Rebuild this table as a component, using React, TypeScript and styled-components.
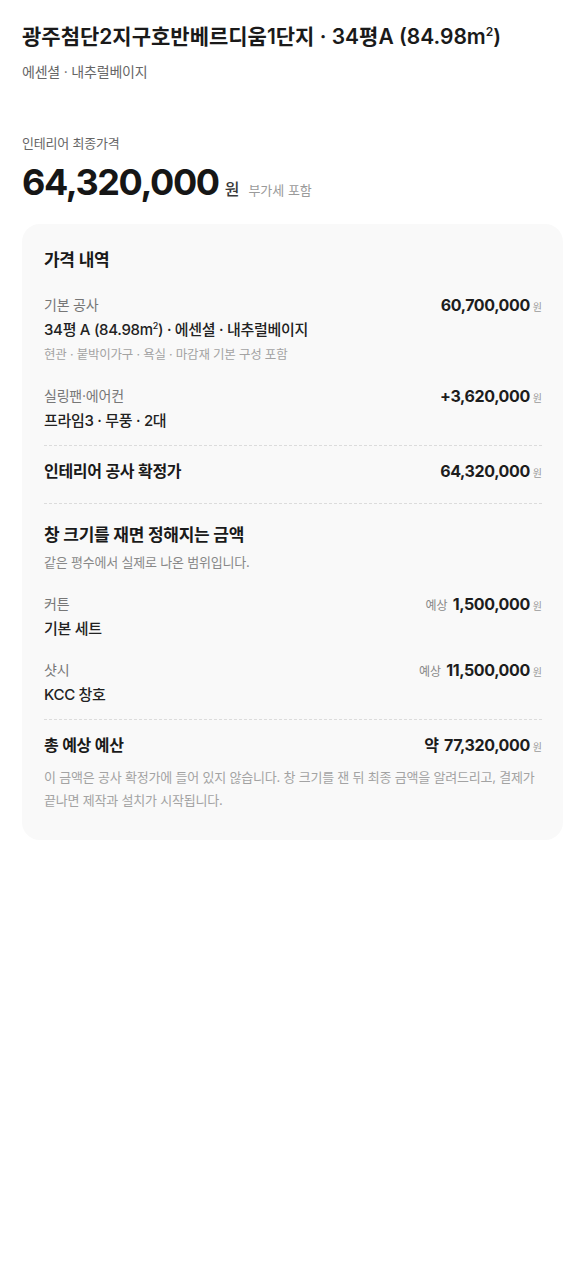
import React from "react";
import styled, { createGlobalStyle } from "styled-components";

const Global = createGlobalStyle`
  html, body { margin: 0; padding: 0; background: #fff; }
  body {
    font-family: Inter, "Noto Sans CJK KR", sans-serif;
    color: #1a1a1a;
    -webkit-font-smoothing: antialiased;
  }
  * { box-sizing: border-box; }
`;

const Page = styled.div`
  width: 585px;
  padding: 22px 22px 40px;
  display: flex;
  flex-direction: column;
`;

const Title = styled.h1`
  margin: 0;
  font-size: 21px;
  line-height: 30px;
  font-weight: 600;
  color: #1a1a1a;
  letter-spacing: 0;
  sup { font-size: 12px; line-height: 0; vertical-align: 8px; }
`;

const Subtitle = styled.div`
  margin-top: 10px;
  font-size: 14px;
  line-height: 20px;
  color: #666;
  letter-spacing: -0.2px;
`;

const PriceLabel = styled.div`
  margin-top: 52px;
  font-size: 13px;
  line-height: 18px;
  color: #666;
  letter-spacing: -0.2px;
`;

const PriceRow = styled.div`
  margin-top: 8px;
  display: flex;
  align-items: baseline;
`;

const BigPrice = styled.span`
  font-size: 36px;
  line-height: 44px;
  font-weight: 700;
  color: #161616;
  letter-spacing: -1.4px;
`;

const BigWon = styled.span`
  margin-left: 6px;
  font-size: 16px;
  font-weight: 500;
  color: #3a3a3a;
`;

const VatNote = styled.span`
  margin-left: 9px;
  font-size: 13px;
  color: #9a9a9a;
`;

const Card = styled.section`
  margin-top: 20px;
  background: #f9f9f9;
  border-radius: 18px;
  padding: 24px 21px 28px 22px;
  display: flex;
  flex-direction: column;
`;

const SectionTitle = styled.h2`
  margin: 0;
  font-size: 17px;
  line-height: 24px;
  font-weight: 600;
  color: #1a1a1a;
  letter-spacing: -0.3px;
`;

const SectionNote = styled.div`
  margin-top: 5px;
  font-size: 13px;
  line-height: 20px;
  color: #888;
  letter-spacing: -0.2px;
`;

const Item = styled.div<{ $gap: number }>`
  margin-top: ${(p) => p.$gap}px;
  display: grid;
  grid-template-columns: 1fr auto;
  column-gap: 12px;
`;

const ItemMain = styled.div`
  display: flex;
  flex-direction: column;
`;

const ItemLabel = styled.div`
  font-size: 14px;
  line-height: 20px;
  color: #777;
  letter-spacing: -0.2px;
`;

const ItemValue = styled.div`
  margin-top: 5px;
  font-size: 15px;
  line-height: 20px;
  font-weight: 500;
  color: #222;
  letter-spacing: -0.3px;
  sup { font-size: 9px; line-height: 0; vertical-align: 6px; }
`;

const ItemSub = styled.div`
  margin-top: 6px;
  font-size: 12.5px;
  line-height: 18px;
  color: #a3a3a3;
  letter-spacing: -0.2px;
`;

const Amount = styled.div`
  display: flex;
  align-items: baseline;
  justify-content: flex-end;
  line-height: 20px;
  white-space: nowrap;
`;

const AmountPrefix = styled.span<{ $strong?: boolean }>`
  margin-right: 5px;
  font-size: ${(p) => (p.$strong ? "16px" : "12px")};
  font-weight: ${(p) => (p.$strong ? 600 : 400)};
  color: ${(p) => (p.$strong ? "#1a1a1a" : "#888")};
`;

const AmountNum = styled.span`
  font-size: 16px;
  font-weight: 700;
  color: #1d1d1d;
  letter-spacing: -0.4px;
`;

const Won = styled.span`
  margin-left: 3px;
  font-size: 10px;
  color: #999;
`;

const Divider = styled.hr<{ $top: number; $bottom: number }>`
  margin: ${(p) => p.$top}px 0 ${(p) => p.$bottom}px;
  border: 0;
  border-top: 1px dashed #dcdcdc;
  height: 0;
`;

const TotalRow = styled.div`
  display: flex;
  justify-content: space-between;
  align-items: baseline;
`;

const TotalLabel = styled.div`
  font-size: 16px;
  line-height: 24px;
  font-weight: 600;
  color: #1a1a1a;
  letter-spacing: -0.3px;
`;

const Disclaimer = styled.p`
  margin: 9px 0 0;
  font-size: 13px;
  line-height: 23px;
  color: #a3a3a3;
  letter-spacing: -0.2px;
`;

type AmtProps = { value: string; prefix?: string; strongPrefix?: boolean };
const Amt = ({ value, prefix, strongPrefix }: AmtProps) => (
  <Amount>
    {prefix && <AmountPrefix $strong={strongPrefix}>{prefix}</AmountPrefix>}
    <AmountNum>{value}</AmountNum>
    <Won>원</Won>
  </Amount>
);

export default function App() {
  return (
    <>
      <Global />
      <Page>
        <Title>
          광주첨단2지구호반베르디움1단지 · 34평A (84.98m<sup>2</sup>)
        </Title>
        <Subtitle>에센셜 · 내추럴베이지</Subtitle>
        <PriceLabel>인테리어 최종가격</PriceLabel>
        <PriceRow>
          <BigPrice>64,320,000</BigPrice>
          <BigWon>원</BigWon>
          <VatNote>부가세 포함</VatNote>
        </PriceRow>

        <Card>
          <SectionTitle>가격 내역</SectionTitle>

          <Item $gap={23}>
            <ItemMain>
              <ItemLabel>기본 공사</ItemLabel>
              <ItemValue>
                34평 A (84.98m<sup>2</sup>) · 에센셜 · 내추럴베이지
              </ItemValue>
              <ItemSub>현관 · 붙박이가구 · 욕실 · 마감재 기본 구성 포함</ItemSub>
            </ItemMain>
            <Amt value="60,700,000" />
          </Item>

          <Item $gap={22}>
            <ItemMain>
              <ItemLabel>실링팬·에어컨</ItemLabel>
              <ItemValue>프라임3 · 무풍 · 2대</ItemValue>
            </ItemMain>
            <Amt value="+3,620,000" />
          </Item>

          <Divider $top={14} $bottom={13} />

          <TotalRow>
            <TotalLabel>인테리어 공사 확정가</TotalLabel>
            <Amt value="64,320,000" />
          </TotalRow>

          <Divider $top={20} $bottom={19} />

          <SectionTitle>창 크기를 재면 정해지는 금액</SectionTitle>
          <SectionNote>같은 평수에서 실제로 나온 범위입니다.</SectionNote>

          <Item $gap={22}>
            <ItemMain>
              <ItemLabel>커튼</ItemLabel>
              <ItemValue>기본 세트</ItemValue>
            </ItemMain>
            <Amt prefix="예상" value="1,500,000" />
          </Item>

          <Item $gap={21}>
            <ItemMain>
              <ItemLabel>샷시</ItemLabel>
              <ItemValue>KCC 창호</ItemValue>
            </ItemMain>
            <Amt prefix="예상" value="11,500,000" />
          </Item>

          <Divider $top={14} $bottom={13} />

          <TotalRow>
            <TotalLabel>총 예상 예산</TotalLabel>
            <Amt prefix="약" strongPrefix value="77,320,000" />
          </TotalRow>

          <Disclaimer>
            이 금액은 공사 확정가에 들어 있지 않습니다. 창 크기를 잰 뒤 최종 금액을 알려드리고, 결제가
            끝나면 제작과 설치가 시작됩니다.
          </Disclaimer>
        </Card>
      </Page>
    </>
  );
}
